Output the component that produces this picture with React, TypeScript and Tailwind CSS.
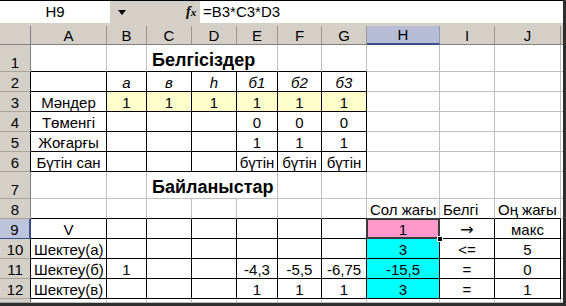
import React from 'react';

type CellDef = {
  t: string;
  align?: 'l' | 'c';
  italic?: boolean;
  bold?: boolean;
  arrow?: boolean;
  bg?: string;
};

const COL_NAMES = ['A', 'B', 'C', 'D', 'E', 'F', 'G', 'H', 'I', 'J'];

// black bordered blocks: rows 2-6 A..G, rows 9-12 A..J
const inBox = (r: number, c: number) =>
  (r >= 2 && r <= 6 && c >= 0 && c <= 6) || (r >= 9 && r <= 12 && c >= 0 && c <= 9);

const data: Record<string, CellDef> = {
  C1: { t: 'Белгісіздер', bold: true, align: 'l' },
  B2: { t: 'a', italic: true },
  C2: { t: 'в', italic: true },
  D2: { t: 'h', italic: true },
  E2: { t: 'б1', italic: true },
  F2: { t: 'б2', italic: true },
  G2: { t: 'б3', italic: true },
  A3: { t: 'Мәндер' },
  B3: { t: '1', bg: 'yellow' },
  C3: { t: '1', bg: 'yellow' },
  D3: { t: '1', bg: 'yellow' },
  E3: { t: '1', bg: 'yellow' },
  F3: { t: '1', bg: 'yellow' },
  G3: { t: '1', bg: 'yellow' },
  A4: { t: 'Төменгі' },
  E4: { t: '0' },
  F4: { t: '0' },
  G4: { t: '0' },
  A5: { t: 'Жоғарғы' },
  E5: { t: '1' },
  F5: { t: '1' },
  G5: { t: '1' },
  A6: { t: 'Бүтін сан' },
  E6: { t: 'бүтін' },
  F6: { t: 'бүтін' },
  G6: { t: 'бүтін' },
  C7: { t: 'Байланыстар', bold: true, align: 'l' },
  H8: { t: 'Сол жағы', align: 'l' },
  I8: { t: 'Белгі', align: 'l' },
  J8: { t: 'Оң жағы', align: 'l' },
  A9: { t: 'V' },
  H9: { t: '1', bg: 'pink' },
  I9: { t: '→', arrow: true },
  J9: { t: 'макс' },
  A10: { t: 'Шектеу(а)', align: 'l' },
  H10: { t: '3', bg: 'cyan' },
  I10: { t: '<=' },
  J10: { t: '5' },
  A11: { t: 'Шектеу(б)', align: 'l' },
  B11: { t: '1' },
  E11: { t: '-4,3' },
  F11: { t: '-5,5' },
  G11: { t: '-6,75' },
  H11: { t: '-15,5', bg: 'cyan' },
  I11: { t: '=' },
  J11: { t: '0' },
  A12: { t: 'Шектеу(в)', align: 'l' },
  E12: { t: '1' },
  F12: { t: '1' },
  G12: { t: '1' },
  H12: { t: '3', bg: 'cyan' },
  I12: { t: '=' },
  J12: { t: '1' },
};

function bgClass(bg?: string) {
  if (bg === 'yellow') return 'bg-[#ffffcc]';
  if (bg === 'pink') return 'bg-[#ff99cc]';
  if (bg === 'cyan') return 'bg-[#00ffff]';
  return 'bg-white';
}

function textClass(d: CellDef) {
  if (d.bold) return 'text-[18px] font-bold leading-[21px] pl-[2px]';
  if (d.arrow) return "text-[16px] leading-[17px] font-['DejaVu_Sans']";
  return `text-[15px] leading-[17px] ${d.italic ? 'italic' : ''}`;
}

function Cell({ r, c, span }: { r: number; c: number; span?: boolean }) {
  const key = COL_NAMES[c] + r;
  const d = data[key];
  const endC = span ? c + 2 : c;
  const rb = inBox(r, endC) || inBox(r, endC + 1);
  const bb = inBox(r, c) || inBox(r + 1, c);
  const selected = key === 'H9';
  return (
    <div
      className={`relative flex items-end overflow-visible whitespace-nowrap border-r border-b ${
        rb ? 'border-r-black' : 'border-r-[#c0c0c0]'
      } ${bb ? 'border-b-black' : 'border-b-[#c0c0c0]'} ${bgClass(d?.bg)} ${
        span ? 'col-span-3 z-[1]' : ''
      } ${d?.align === 'l' ? 'justify-start pl-[3px]' : 'justify-center'}`}
    >
      {d && <span className={textClass(d)}>{d.t}</span>}
      {selected && (
        <>
          <div className="absolute -left-px -top-px -right-px -bottom-px border-2 border-[#3a3a3a] z-10" />
          <div className="absolute -right-[4px] -bottom-[4px] w-[6px] h-[6px] bg-black border border-white z-20" />
        </>
      )}
    </div>
  );
}

function RowHead({ r }: { r: number }) {
  const sel = r === 9;
  const black = inBox(r, 0) && !sel;
  return (
    <div
      className={`flex items-end justify-center text-[15px] leading-[17px] border-b ${
        sel
          ? 'bg-[#bcc5dc] border-r-2 border-r-[#3b4f8e] border-b-[#3b4f8e]'
          : `bg-[#d4d0c8] border-r border-b-[#a8a49c] ${black ? 'border-r-black' : 'border-r-[#808080]'}`
      }`}
    >
      {r < 13 ? r : ''}
    </div>
  );
}

export default function App() {
  const rows = [1, 2, 3, 4, 5, 6, 7, 8, 9, 10, 11, 12, 13];
  return (
    <div
      className="w-[566px] h-[306px] overflow-hidden bg-[#d4d0c8] border-r-[3px] border-b-[3px] border-[#2e2e2e] flex flex-col text-black"
      style={{ fontFamily: '"Liberation Sans", Arial, sans-serif' }}
    >
      {/* formula bar */}
      <div className="h-[26px] shrink-0 border-t border-black flex items-start">
        <div className="w-[110px] h-[22px] bg-white flex items-center justify-center text-[15px]">H9</div>
        <div className="w-[90px] h-[22px] flex items-center">
          <svg width="8" height="5" viewBox="0 0 8 5" className="ml-[8px]">
            <path d="M0 0 H8 L4 5 Z" fill="#000" />
          </svg>
          <span
            className="ml-[60px] text-[14px] font-bold italic leading-none"
            style={{ fontFamily: '"Liberation Serif", serif' }}
          >
            f<span className="text-[11px]">x</span>
          </span>
        </div>
        <div className="flex-1 h-[22px] bg-white flex items-center pl-[3px] text-[15px]">=B3*C3*D3</div>
      </div>

      {/* sheet */}
      <div className="flex-1 grid grid-cols-[31px_76px_40px_45px_45px_41px_44px_45px_73px_55px_66px_1fr] grid-rows-[19px_27px_20px_20px_20px_20px_20px_27px_20px_20px_20px_20px_20px_1fr] bg-white">
        {/* column headers */}
        <div className="bg-[#d4d0c8] border-r border-b border-r-[#808080] border-b-[#808080]" />
        {COL_NAMES.map((n) => (
          <div
            key={n}
            className={`flex items-end justify-center text-[15px] leading-[17px] border-r ${
              n === 'H'
                ? 'bg-[#b6bdd4] border-r-[#8f98b8] border-b-2 border-b-[#3b4f8e]'
                : 'bg-[#d4d0c8] border-r-[#9a968e] border-b border-b-[#808080]'
            }`}
          >
            {n}
          </div>
        ))}
        <div className="bg-[#d4d0c8] border-b border-b-[#808080]" />

        {rows.map((r) => (
          <React.Fragment key={r}>
            <RowHead r={r} />
            {COL_NAMES.map((_, c) => {
              if ((r === 1 || r === 7) && (c === 3 || c === 4)) return null;
              const span = (r === 1 || r === 7) && c === 2;
              return <Cell key={c} r={r} c={c} span={span} />;
            })}
            <div className="bg-white border-b border-b-[#c0c0c0]" />
          </React.Fragment>
        ))}
      </div>
    </div>
  );
}
